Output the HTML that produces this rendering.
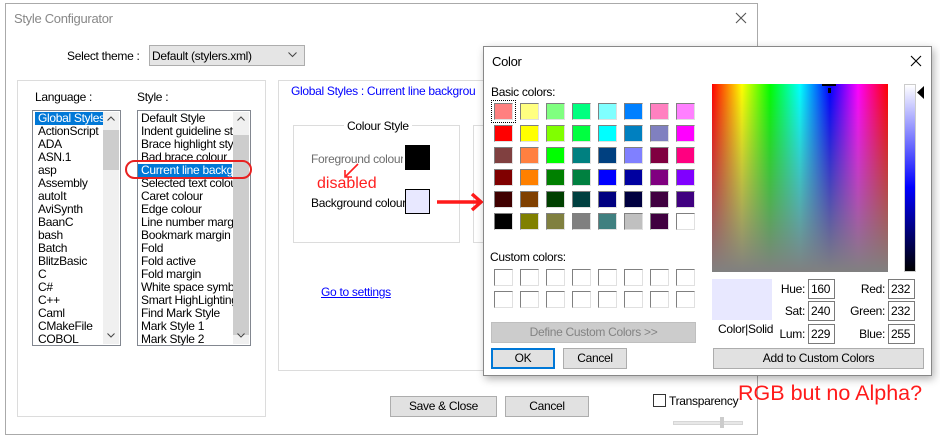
<!DOCTYPE html>
<html><head><meta charset="utf-8"><style>
*{box-sizing:border-box;margin:0;padding:0}
body{width:940px;height:440px;background:#fff;position:relative;overflow:hidden;font-family:"Liberation Sans",sans-serif;font-size:12px;letter-spacing:-0.3px;color:#000}
.a{position:absolute}
.t{position:absolute;white-space:nowrap;line-height:14px}
.btn{position:absolute;background:#e1e1e1;border:1px solid #adadad;text-align:center;line-height:18px}
.grp{position:absolute;border:1px solid #dcdcdc}
.lst{position:absolute;border:1px solid #828790;background:#fff;overflow:hidden}
.lst div{height:13px;line-height:13px;padding-left:3px;white-space:nowrap}
.sb{position:absolute;top:1px;bottom:1px;right:1px;width:16px;background:#f0f0f0}
.sw{position:absolute;width:19px;height:17px;border:1px solid;border-color:#808080 #e0e0e0 #e0e0e0 #808080}
.inp{position:absolute;border:1px solid #7a7a7a;background:#fff;height:20px;line-height:18px;padding-left:2px;font-size:12px}
.lb{position:absolute;text-align:right;width:60px;line-height:20px;font-size:12px}
</style></head><body>
<div class="a" style="left:5px;top:3px;width:753px;height:432px;border:1px solid #aaa;background:#fff"></div>
<div class="t" style="left:14px;top:12px;color:#888;font-size:13px">Style Configurator</div>
<svg class="a" style="left:735px;top:12px" width="12" height="12"><path d="M1 1L11 11M11 1L1 11" stroke="#555" stroke-width="1.1"/></svg>
<div class="t" style="left:67px;top:49px">Select theme :</div>
<div class="a" style="left:149px;top:45px;width:156px;height:21px;background:#e5e5e5;border:1px solid #adadad"></div>
<div class="t" style="left:152px;top:49px">Default (stylers.xml)</div>
<svg class="a" style="left:288px;top:52px" width="9" height="6"><path d="M0.5 0.5L4.5 4.5L8.5 0.5" stroke="#444" fill="none"/></svg>
<div class="grp" style="left:17px;top:80px;width:249px;height:337px"></div>
<div class="t" style="left:35px;top:90px">Language :</div>
<div class="t" style="left:137px;top:90px">Style :</div>
<div class="lst" style="left:32px;top:110px;width:89px;height:236px;padding-top:1px;padding-left:2px">
<div style="background:#0078d7;color:#fff;width:68px">Global Styles</div><div>ActionScript</div><div>ADA</div><div>ASN.1</div><div>asp</div><div>Assembly</div><div>autoIt</div><div>AviSynth</div><div>BaanC</div><div>bash</div><div>Batch</div><div>BlitzBasic</div><div>C</div><div>C#</div><div>C++</div><div>Caml</div><div>CMakeFile</div><div>COBOL</div>
<span class="sb"><span class="a" style="left:0;top:18px;width:16px;height:40px;background:#cdcdcd"></span><svg class="a" style="left:4px;top:4px" width="8" height="5"><path d="M0.5 4.5L4 1L7.5 4.5" stroke="#444" fill="none"/></svg><svg class="a" style="left:4px;bottom:6px" width="8" height="5"><path d="M0.5 0.5L4 4L7.5 0.5" stroke="#444" fill="none"/></svg></span>
</div>
<div class="lst" style="left:137px;top:110px;width:114px;height:236px;padding-top:1px">
<div>Default Style</div><div>Indent guideline sty</div><div>Brace highlight style</div><div>Bad brace colour</div><div style="background:#0078d7;color:#fff;width:94px">Current line backgr</div><div>Selected text colour</div><div>Caret colour</div><div>Edge colour</div><div>Line number margin</div><div>Bookmark margin</div><div>Fold</div><div>Fold active</div><div>Fold margin</div><div>White space symbo</div><div>Smart HighLighting</div><div>Find Mark Style</div><div>Mark Style 1</div><div>Mark Style 2</div>
<span class="sb"><span class="a" style="left:0;top:23px;width:16px;height:200px;background:#cdcdcd"></span><svg class="a" style="left:4px;top:4px" width="8" height="5"><path d="M0.5 4.5L4 1L7.5 4.5" stroke="#444" fill="none"/></svg><svg class="a" style="left:4px;bottom:6px" width="8" height="5"><path d="M0.5 0.5L4 4L7.5 0.5" stroke="#444" fill="none"/></svg></span>
</div>
<div class="a" style="left:125px;top:160px;width:127px;height:19px;border:2px solid #e82020;border-radius:10px"></div>
<div class="grp" style="left:278px;top:80px;width:220px;height:291px"></div>
<div class="t" style="left:291px;top:84px;color:#0000ff">Global Styles : Current line backgrou</div>
<div class="grp" style="left:293px;top:125px;width:167px;height:118px"></div>
<div class="t" style="left:344px;top:119px;background:#fff;padding:0 3px">Colour Style</div>
<div class="t" style="left:311px;top:152px;color:#6d6d6d;background:#fff;width:92px;overflow:hidden">Foreground colour</div>
<div class="a" style="left:405px;top:145px;width:25px;height:25px;background:#000"></div>
<div class="t" style="left:317px;top:175px;color:#ff2020;font-size:16px;line-height:18px;letter-spacing:0">disabled</div>
<svg class="a" style="left:340px;top:162px" width="22" height="20"><path d="M18 2 L6 14 M5 8 L5 15 L12 15" stroke="#ff2020" stroke-width="1.6" fill="none"/></svg>
<div class="t" style="left:311px;top:196px">Background colour</div>
<div class="a" style="left:405px;top:189px;width:25px;height:25px;background:#e8e8ff;border:1px solid #000"></div>
<div class="grp" style="left:473px;top:125px;width:20px;height:118px"></div>
<svg class="a" style="left:436px;top:192px" width="48" height="20"><path d="M1 10 L44 10 M36 2 L45 10 L36 18" stroke="#ff1a1a" stroke-width="3.5" fill="none"/></svg>
<div class="t" style="left:321px;top:285px;color:#0000ff;text-decoration:underline">Go to settings</div>
<div class="btn" style="left:390px;top:396px;width:107px;height:21px">Save &amp; Close</div>
<div class="btn" style="left:505px;top:396px;width:84px;height:21px">Cancel</div>
<div class="a" style="left:653px;top:394px;width:13px;height:13px;border:1px solid #333;background:#fff"></div>
<div class="t" style="left:669px;top:394px">Transparency</div>
<div class="a" style="left:673px;top:421px;width:70px;height:4px;background:#e7e7e7;border:1px solid #d6d6d6"></div>
<div class="a" style="left:720px;top:417px;width:4px;height:11px;background:#ccc"></div>

<div class="a" style="left:483px;top:46px;width:449px;height:330px;border:1px solid #888;background:#fff;box-shadow:2px 3px 8px rgba(0,0,0,.3)"></div>
<div class="t" style="left:492px;top:55px;font-size:13px">Color</div>
<svg class="a" style="left:910px;top:55px" width="12" height="12"><path d="M1 1L11 11M11 1L1 11" stroke="#000" stroke-width="1.1"/></svg>
<div class="t" style="left:491px;top:85px">Basic colors:</div>
<div id="bc"></div>
<div class="a" style="left:491px;top:100px;width:25px;height:23px;border:1px dotted #000"></div>
<div class="t" style="left:490px;top:250px">Custom colors:</div>
<div id="cc"></div>
<div class="btn" style="left:491px;top:322px;width:205px;height:21px;background:#ccc;border-color:#bfbfbf;color:#838383">Define Custom Colors &gt;&gt;</div>
<div class="btn" style="left:491px;top:348px;width:64px;height:21px;border:2px solid #0078d7;line-height:17px">OK</div>
<div class="btn" style="left:563px;top:348px;width:64px;height:21px">Cancel</div>
<div class="a" style="left:712px;top:84px;width:176px;height:188px;background:linear-gradient(to bottom,rgba(128,128,128,0),#808080),linear-gradient(to right,#f00,#ff0 17%,#0f0 33%,#0ff 50%,#00f 67%,#f0f 83%,#f00)"></div>
<div class="a" style="left:822px;top:84px;width:14px;height:2px;background:#000"></div>
<div class="a" style="left:828px;top:88px;width:3px;height:5px;background:#000"></div>
<div class="a" style="left:904px;top:84px;width:12px;height:188px;border:1px solid #ccc;background:linear-gradient(to bottom,#fff,#0000ff 55%,#000)"></div>
<svg class="a" style="left:917px;top:86px" width="8" height="13"><path d="M0 6.5 L7 0 L7 13 Z" fill="#000"/></svg>
<div class="a" style="left:712px;top:279px;width:60px;height:41px;background:#e8e8ff"></div>
<div class="t" style="left:718px;top:322px">Color|Solid</div>
<div class="lb" style="left:745px;top:279px">Hue:</div><div class="inp" style="left:808px;top:279px;width:27px">160</div>
<div class="lb" style="left:745px;top:301px">Sat:</div><div class="inp" style="left:808px;top:301px;width:27px">240</div>
<div class="lb" style="left:745px;top:324px">Lum:</div><div class="inp" style="left:808px;top:324px;width:27px">229</div>
<div class="lb" style="left:825px;top:279px">Red:</div><div class="inp" style="left:888px;top:279px;width:27px">232</div>
<div class="lb" style="left:825px;top:301px">Green:</div><div class="inp" style="left:888px;top:301px;width:27px">232</div>
<div class="lb" style="left:825px;top:324px">Blue:</div><div class="inp" style="left:888px;top:324px;width:27px">255</div>
<div class="btn" style="left:713px;top:348px;width:211px;height:21px">Add to Custom Colors</div>
<div class="t" style="left:738px;top:380px;color:#ff1a1a;font-size:21.5px;line-height:26px;letter-spacing:0">RGB but no Alpha?</div>
<script>
var c=["#ff8080 #ffff80 #80ff80 #00ff80 #80ffff #0080ff #ff80c0 #ff80ff","#ff0000 #ffff00 #80ff00 #00ff40 #00ffff #0080c0 #8080c0 #ff00ff","#804040 #ff8040 #00ff00 #008080 #004080 #8080ff #800040 #ff0080","#800000 #ff8000 #008000 #008040 #0000ff #0000a0 #800080 #8000ff","#400000 #804000 #004000 #004040 #000080 #000040 #400040 #400080","#000000 #808000 #808040 #808080 #408080 #c0c0c0 #400040 #ffffff"];
var h="";for(var r=0;r<6;r++){var a=c[r].split(" ");for(var i=0;i<8;i++)h+='<div class="sw" style="left:'+(494+i*26)+'px;top:'+(103+r*22)+'px;background:'+a[i]+'"></div>';}
document.getElementById("bc").outerHTML=h;
h="";for(var r=0;r<2;r++)for(var i=0;i<8;i++)h+='<div class="sw" style="left:'+(494+i*26)+'px;top:'+(269+r*22)+'px;background:#fff"></div>';
document.getElementById("cc").outerHTML=h;
</script>
</body></html>
